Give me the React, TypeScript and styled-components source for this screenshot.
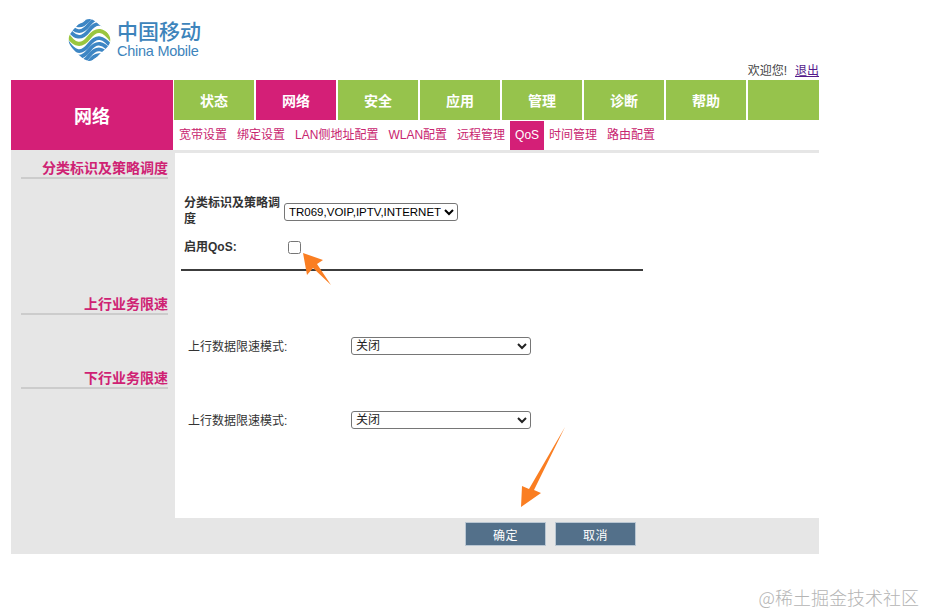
import React from "react";
import styled, { createGlobalStyle } from "styled-components";

const Global = createGlobalStyle`
  html, body { margin: 0; padding: 0; background: #fff; }
  body { font-family: "Liberation Sans", "Noto Sans CJK SC", sans-serif; font-size: 12px; color: #333; }
  * { box-sizing: border-box; }
`;

const Page = styled.div`
  position: relative;
  width: 926px;
  height: 613px;
  padding-left: 11px;
  overflow: hidden;
`;
const Frame = styled.div`
  width: 808px;
`;
const TopBar = styled.div`
  height: 80px;
  display: flex;
  justify-content: space-between;
  align-items: flex-end;
`;
const Brand = styled.div`
  display: flex;
  align-items: center;
  gap: 6px;
  margin: 0 0 19px 57px;
`;
const BrandText = styled.div`
  display: flex;
  flex-direction: column;
  color: #3d84bb;
`;
const BrandCn = styled.span`
  font-size: 21px;
  line-height: 22px;
  font-weight: 500;
`;
const BrandEn = styled.span`
  font-size: 14.5px;
  line-height: 16px;
  letter-spacing: -0.25px;
`;
const Welcome = styled.div`
  font-size: 12px;
  line-height: 16px;
  padding-bottom: 1px;
  color: #444;
  display: flex;
  gap: 8px;
`;
const Logout = styled.a`
  color: #551a8b;
  text-decoration: underline;
`;
const Header = styled.div`
  display: flex;
  height: 70px;
`;
const SectionBlock = styled.div`
  width: 162px;
  background: #d41f77;
  color: #fff;
  font-size: 18px;
  font-weight: 700;
  display: flex;
  align-items: center;
  justify-content: center;
  flex: none;
`;
const NavArea = styled.div`
  flex: 1;
  padding-left: 1px;
`;
const Tabs = styled.div`
  display: flex;
  gap: 2px;
  height: 40px;
`;
const Tab = styled.div<{ $active?: boolean; $fill?: boolean }>`
  width: ${(p) => (p.$fill ? "71px" : "80px")};
  background: ${(p) => (p.$active ? "#d41f77" : "#96c34c")};
  color: #fff;
  font-size: 14px;
  font-weight: 700;
  padding-bottom: 1px;
  display: flex;
  align-items: center;
  justify-content: center;
`;
const SubNav = styled.div`
  display: flex;
  height: 29px;
  margin-top: 1px;
  padding-left: 5px;
  gap: 10px;
`;
const SubItem = styled.div<{ $active?: boolean }>`
  font-size: 12px;
  display: flex;
  align-items: center;
  color: ${(p) => (p.$active ? "#fff" : "#c8256f")};
  background: ${(p) => (p.$active ? "#d41f77" : "transparent")};
  padding: ${(p) => (p.$active ? "0 5px 1px" : "0 0 4px")};
  margin: ${(p) => (p.$active ? "0 -5px" : "0")};
`;
const Body = styled.div`
  display: flex;
  height: 368px;
`;
const Sidebar = styled.div`
  width: 164px;
  background: #e6e6e6;
  padding: 0 7px 0 10px;
  flex: none;
`;
const SideTitle = styled.div<{ $top: number }>`
  margin-top: ${(p) => p.$top}px;
  height: 19px;
  line-height: 17px;
  font-size: 14px;
  font-weight: 700;
  text-align: right;
  color: #cf2273;
  border-bottom: 2px solid #cccccc;
`;
const Main = styled.div`
  flex: 1;
  border-top: 3px solid #e6e6e6;
  padding-top: 43px;
`;
const QosForm = styled.div`
  width: 462px;
  margin-left: 6px;
  border-bottom: 2px solid #3c3c3c;
  padding: 0 0 13px 3px;
`;
const FormRow = styled.div<{ $gap?: number }>`
  display: flex;
  align-items: center;
  margin-bottom: ${(p) => p.$gap ?? 0}px;
`;
const BoldLabel = styled.label`
  width: 100px;
  font-size: 12px;
  line-height: 15.5px;
  font-weight: 700;
  color: #333;
  flex: none;
`;
const PolicySelect = styled.select`
  width: 174px;
  height: 18px;
  font-family: "Liberation Sans", sans-serif;
  font-size: 11.5px;
  color: #000;
  background: #fff;
  border: 1px solid #767676;
  border-radius: 3px;
  padding: 0;
`;
const Check = styled.input`
  width: 13px;
  height: 13px;
  margin: 0 0 0 4px;
`;
const RateRow = styled.div<{ $top: number }>`
  display: flex;
  align-items: center;
  margin: ${(p) => p.$top}px 0 0 13px;
`;
const RateLabel = styled.label`
  width: 163px;
  font-size: 12px;
  color: #333;
  flex: none;
`;
const RateSelect = styled.select`
  width: 180px;
  height: 18px;
  font-size: 12px;
  font-family: "Liberation Sans", "Noto Sans CJK SC", sans-serif;
  color: #222;
  background: #fff;
  border: 1px solid #767676;
  border-radius: 3px;
  padding: 0 0 3px;
`;
const Footer = styled.div`
  height: 36px;
  background: #e6e6e6;
  display: flex;
  align-items: center;
  padding: 0 0 4px 454px;
  gap: 9px;
`;
const ActionButton = styled.button`
  width: 81px;
  height: 24px;
  background: #53708a;
  color: #fff;
  font-family: inherit;
  font-size: 12px;
  letter-spacing: 0.5px;
  border: 1px solid #b9c6d2;
  padding: 0;
`;
const Watermark = styled.div`
  position: absolute;
  right: 7px;
  bottom: 5px;
  font-size: 18px;
  line-height: 22px;
  color: #b4b4b4;
  font-family: "Noto Sans CJK SC", sans-serif;
  font-weight: 300;
`;
const Overlay = styled.svg`
  position: absolute;
  left: 0;
  top: 0;
  pointer-events: none;
`;

const wave = (y: number) =>
  `M-2 ${y} C6 ${y + 13} 13 ${y + 13} 20 ${y + 4} C27 ${y - 5} 34 ${y - 5} 43 ${y + 8}`;

const Logo = () => (
  <svg width="43" height="42" viewBox="0 0 41 41" fill="none">
    <defs>
      <clipPath id="logo-clip">
        <path d="M20.5 0 C24 0 27 3 34 9 C38 13 41 17 41 20.500 C41 24 38 28 33 32 C28 37 24 41 20.500 41 C16 41 11 36 7 32 C3 28 0 24 0 20.500 C0 16 3 12 7 8 C12 3 16 0 20.500 0 Z" />
      </clipPath>
    </defs>
    <g clipPath="url(#logo-clip)" strokeWidth="3.6">
      {[-15, -9.500, -4, 1.500, 7, 21, 26.500, 32, 37.500].map((y) => (
        <path key={y} d={wave(y)} stroke="#3d86c4" />
      ))}
      <path d={wave(14)} stroke="#9ac63f" strokeWidth="4" />
    </g>
  </svg>
);

const tabs = ["状态", "网络", "安全", "应用", "管理", "诊断", "帮助"];
const subs = ["宽带设置", "绑定设置", "LAN侧地址配置", "WLAN配置", "远程管理", "QoS", "时间管理", "路由配置"];

export default function App() {
  return (
    <Page>
      <Global />
      <Frame>
        <TopBar>
          <Brand>
            <Logo />
            <BrandText>
              <BrandCn>中国移动</BrandCn>
              <BrandEn>China Mobile</BrandEn>
            </BrandText>
          </Brand>
          <Welcome>
            <span>欢迎您!</span>
            <Logout href="#">退出</Logout>
          </Welcome>
        </TopBar>
        <Header>
          <SectionBlock>网络</SectionBlock>
          <NavArea>
            <Tabs>
              {tabs.map((t) => (
                <Tab key={t} $active={t === "网络"}>{t}</Tab>
              ))}
              <Tab $fill />
            </Tabs>
            <SubNav>
              {subs.map((s) => (
                <SubItem key={s} $active={s === "QoS"}>{s}</SubItem>
              ))}
            </SubNav>
          </NavArea>
        </Header>
        <Body>
          <Sidebar>
            <SideTitle $top={10}>分类标识及策略调度</SideTitle>
            <SideTitle $top={117}>上行业务限速</SideTitle>
            <SideTitle $top={55}>下行业务限速</SideTitle>
          </Sidebar>
          <Main>
            <QosForm>
              <FormRow $gap={13}>
                <BoldLabel>分类标识及策略调度</BoldLabel>
                <PolicySelect defaultValue="a">
                  <option value="a">TR069,VOIP,IPTV,INTERNET</option>
                </PolicySelect>
              </FormRow>
              <FormRow>
                <BoldLabel>启用QoS:</BoldLabel>
                <Check type="checkbox" />
              </FormRow>
            </QosForm>
            <RateRow $top={66}>
              <RateLabel>上行数据限速模式:</RateLabel>
              <RateSelect><option>关闭</option></RateSelect>
            </RateRow>
            <RateRow $top={56}>
              <RateLabel>上行数据限速模式:</RateLabel>
              <RateSelect><option>关闭</option></RateSelect>
            </RateRow>
          </Main>
        </Body>
        <Footer>
          <ActionButton>确定</ActionButton>
          <ActionButton>取消</ActionButton>
        </Footer>
      </Frame>
      <Overlay width="926" height="613">
        <polygon points="303,253 323,260 317,264 331,285 313,268 307,275" fill="#fa7e22" />
        <polygon points="565,427 534,490 541,493 521,507 522,486 529,489" fill="#fa7e22" />
      </Overlay>
      <Watermark>@稀土掘金技术社区</Watermark>
    </Page>
  );
}
